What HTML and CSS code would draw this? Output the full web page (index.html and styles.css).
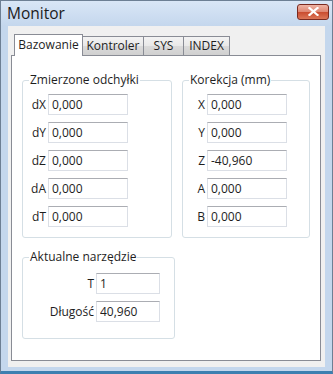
FILE: index.html
```html
<!DOCTYPE html>
<html lang="pl">

<head>
  <meta charset="UTF-8">
  <meta name="viewport" content="width=device-width, initial-scale=1.0">
  <title>Monitor</title>
  <link rel="stylesheet" href="styles.css">
</head>

<body>
  <div class="window">
    <div class="titlebar">
      <span class="title">Monitor</span>
      <button type="button" class="close-btn">
        <svg width="11" height="9" viewBox="0 0 11 9">
          <path d="M1.5 1 L9.5 8 M9.5 1 L1.5 8" stroke="#fff" stroke-width="2.2" stroke-linecap="square" />
        </svg>
      </button>
    </div>

    <div class="client">
      <div class="tabs">
        <div class="tab active tab-baz">Bazowanie</div>
        <div class="tab tab-kon">Kontroler</div>
        <div class="tab tab-sys">SYS</div>
        <div class="tab tab-idx">INDEX</div>
      </div>

      <div class="panel">
        <div class="top-row">
          <fieldset class="group group-left">
            <legend>Zmierzone odchyłki</legend>
            <div class="row"><label>dX</label><input type="text" value="0,000"></div>
            <div class="row"><label>dY</label><input type="text" value="0,000"></div>
            <div class="row"><label>dZ</label><input type="text" value="0,000"></div>
            <div class="row"><label>dA</label><input type="text" value="0,000"></div>
            <div class="row"><label>dT</label><input type="text" value="0,000"></div>
          </fieldset>

          <fieldset class="group group-right">
            <legend>Korekcja (mm)</legend>
            <div class="row"><label>X</label><input type="text" value="0,000"></div>
            <div class="row"><label>Y</label><input type="text" value="0,000"></div>
            <div class="row"><label>Z</label><input type="text" value="-40,960"></div>
            <div class="row"><label>A</label><input type="text" value="0,000"></div>
            <div class="row"><label>B</label><input type="text" value="0,000"></div>
          </fieldset>
        </div>

        <fieldset class="group group-tool">
          <legend>Aktualne narzędzie</legend>
          <div class="row"><label>T</label><input type="text" value="1"></div>
          <div class="row"><label>Długość</label><input type="text" value="40,960"></div>
        </fieldset>
      </div>
    </div>
  </div>
</body>

</html>
```

FILE: styles.css
```css
body {
  margin: 0;
  padding: 0;
  font-family: "Open Sans", "Noto Sans", sans-serif;
  font-size: 12px;
  color: #1e1e1e;
  background-color: #3f7fae;
}

.window {
  width: 333px;
  height: 374px;
  box-sizing: border-box;
  background: #c4d7ed;
  border: 1px solid #6d7f94;
  border-bottom: 3px solid #3d7fb0;
  display: flex;
  flex-direction: column;
}

.titlebar {
  height: 25px;
  display: flex;
  align-items: center;
  justify-content: space-between;
  padding: 0 3px 0 6px;
  background: linear-gradient(#d9e6f6, #c4d7ed);
}

.title {
  font-size: 15.5px;
  color: #1b1b1b;
  margin-top: -2px;
}

.close-btn {
  width: 32px;
  height: 16px;
  margin-top: -4px;
  padding: 0;
  border: 1px solid #7a2a20;
  border-radius: 3px;
  background: linear-gradient(#eeb3a4, #de8570 50%, #c94b2f 51%, #dc7758);
  display: flex;
  align-items: center;
  justify-content: center;
}

.client {
  flex: 1;
  margin: 0 7px 4px 7px;
  background: #f0f0f0;
  padding: 8px 4px 6px 3px;
  display: flex;
  flex-direction: column;
}

.tabs {
  display: flex;
  align-items: flex-end;
  padding-left: 3px;
  height: 21px;
}

.tab {
  height: 19px;
  line-height: 18px;
  text-align: center;
  box-sizing: border-box;
  border: 1px solid #898c95;
  border-bottom: none;
  border-left: none;
  background: linear-gradient(#f3f3f3, #e8e8e8 50%, #dadada 51%, #d0d0d0);
}

.tab.active {
  height: 22px;
  line-height: 19px;
  border-left: 1px solid #898c95;
  background: #fff;
  margin-bottom: -1px;
  position: relative;
  z-index: 1;
}

.tab-baz {
  width: 69px;
}

.tab-kon {
  width: 61px;
}

.tab-sys {
  width: 40px;
}

.tab-idx {
  width: 46px;
}

.panel {
  flex: 1;
  background: #fff;
  border: 1px solid #898c95;
  padding: 16px 10px 0 10px;
}

.top-row {
  display: flex;
  gap: 10px;
}

.group {
  margin: 0;
  padding: 6px 0 10px 0;
  border: 1px solid #d5dfe5;
  border-radius: 3px;
}

.group legend {
  padding: 0 1px;
  margin-left: 6px;
  line-height: 16px;
}

.group-left {
  width: 150px;
  box-sizing: border-box;
}

.group-right {
  width: 128px;
  box-sizing: border-box;
}

.group-tool {
  width: 153px;
  box-sizing: border-box;
  margin-top: 11px;
  padding-top: 8px;
  padding-bottom: 16px;
}

.row {
  display: flex;
  align-items: center;
  height: 21px;
  margin-bottom: 7px;
}

.row:last-child {
  margin-bottom: 0;
}

.row label {
  width: 25px;
  padding-right: 2px;
  box-sizing: border-box;
  text-align: right;
}

.group-right .row label {
  width: 24px;
}

.group-tool .row label {
  width: 73px;
}

.row input {
  width: 80px;
  height: 21px;
  box-sizing: border-box;
  margin: 0;
  padding: 0 3px;
  border: 1px solid #dbdfe6;
  border-top-color: #abadb3;
  font-family: "Open Sans", "Noto Sans", sans-serif;
  font-size: 12px;
  color: #1e1e1e;
}

.group-tool .row input {
  width: 64px;
}
```
